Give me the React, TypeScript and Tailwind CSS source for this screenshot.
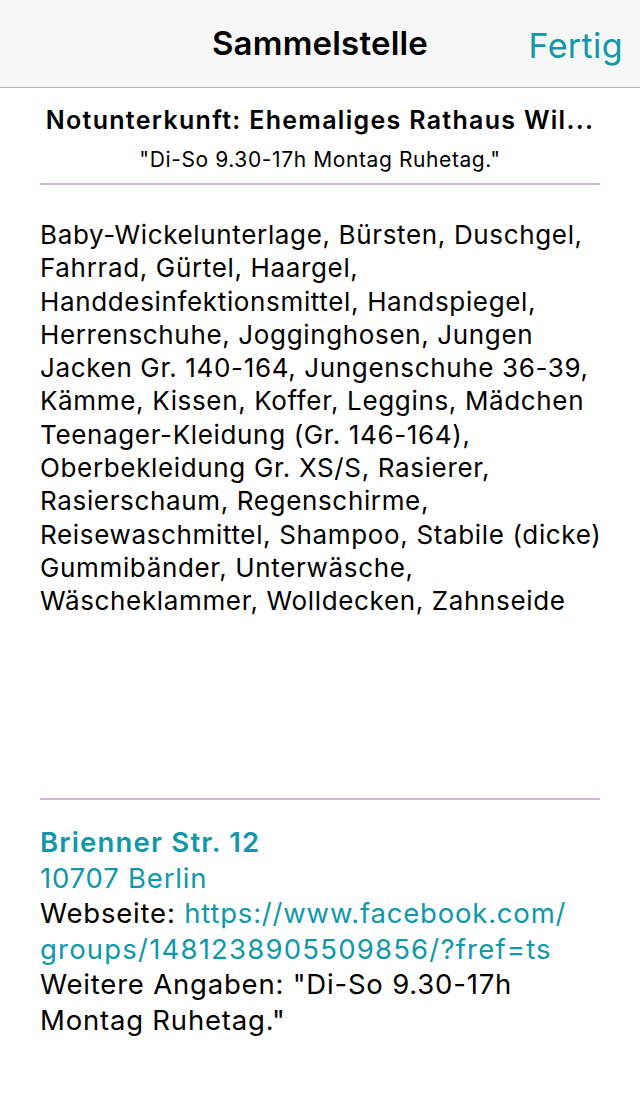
export default function App() {
    const lines = [
        "Baby-Wickelunterlage, Bürsten, Duschgel,",
        "Fahrrad, Gürtel, Haargel,",
        "Handdesinfektionsmittel, Handspiegel,",
        "Herrenschuhe, Jogginghosen, Jungen",
        "Jacken Gr. 140-164, Jungenschuhe 36-39,",
        "Kämme, Kissen, Koffer, Leggins, Mädchen",
        "Teenager-Kleidung (Gr. 146-164),",
        "Oberbekleidung Gr. XS/S, Rasierer,",
        "Rasierschaum, Regenschirme,",
        "Reisewaschmittel, Shampoo, Stabile (dicke)",
        "Gummibänder, Unterwäsche,",
        "Wäscheklammer, Wolldecken, Zahnseide",
    ];

    return (
        <div className="w-[640px] h-[1096px] bg-white text-black font-['Inter',sans-serif] flex flex-col">
            {/* nav bar */}
            <div className="h-[88px] shrink-0 bg-[#f7f7f7] border-b border-[#b2b2b2] flex items-center relative">
                <div className="flex-1 text-center text-[33px] font-semibold tracking-[0.2px]">Sammelstelle</div>
                <div className="absolute right-[17px] top-[20px] text-[34px] text-[#1097a9] tracking-[0.4px]">Fertig</div>
            </div>

            {/* header */}
            <div className="px-[40px] pt-[16px]">
                <div className="text-center text-[25px] font-semibold leading-[32px] whitespace-nowrap overflow-hidden tracking-[1.3px]">
                    Notunterkunft: Ehemaliges Rathaus Wil...
                </div>
                <div className="text-center text-[21px] leading-[28px] mt-[10px] tracking-[0.6px]">"Di-So 9.30-17h Montag Ruhetag."</div>
                <div className="h-[2px] bg-[#d3b8d3] mt-[9px]" />
            </div>

            {/* needed items */}
            <div className="px-[40px] h-[613px] pt-[33px]">
                <p className="text-[26px] leading-[33.3px] tracking-[0.65px] whitespace-nowrap">
                    {lines.map((l, i) => (
                        <span key={i}>
                            {l}
                            <br />
                        </span>
                    ))}
                </p>
            </div>

            {/* address */}
            <div className="px-[40px]">
                <div className="h-[2px] bg-[#d3b8d3]" />
                <div className="pt-[25px] text-[27.5px] leading-[35.6px] tracking-[0.8px]">
                    <div className="font-semibold text-[#1097a9] tracking-[1.2px]">Brienner Str. 12</div>
                    <div className="text-[#1097a9]">10707 Berlin</div>
                    <div>
                        Webseite: <span className="text-[#1097a9]">https://www.facebook.com/</span>
                        <br />
                        <span className="text-[#1097a9] tracking-[1.2px]">groups/1481238905509856/?fref=ts</span>
                    </div>
                    <div>
                        Weitere Angaben: "Di-So 9.30-17h
                        <br />
                        Montag Ruhetag."
                    </div>
                </div>
            </div>
        </div>
    );
}
